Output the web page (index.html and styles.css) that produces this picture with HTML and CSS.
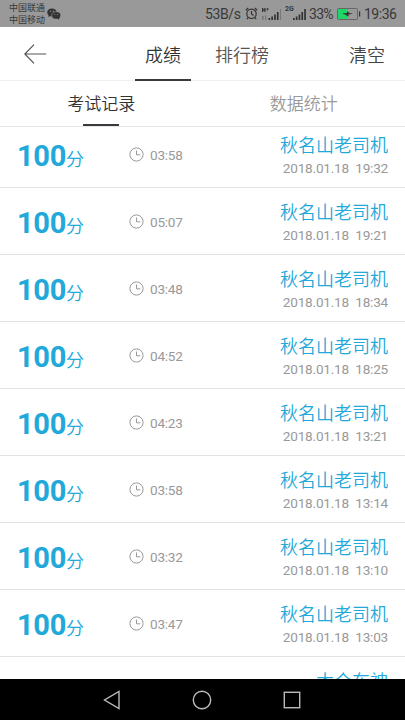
FILE: index.html
```
<!DOCTYPE html>
<html lang="zh-CN">
<head>
<meta charset="utf-8">
<title>考试记录</title>
<link rel="stylesheet" href="styles.css">
</head>
<body>
<svg class="defs" width="0" height="0">
  <symbol id="clock" viewBox="0 0 15 15"><circle cx="7.5" cy="7.5" r="6.6"/><path d="M7.5 3.5v4.300h3.800"/></symbol>
</svg>
<div class="screen">
  <div class="status">
    <div class="carriers"><span>中国联通</span><span>中国移动</span></div>
    <svg class="wechat" width="14" height="12" viewBox="0 0 14 12">
      <path class="ink" d="M1.600 7L1.400 9l1.800-.9z"/>
      <ellipse class="ink" cx="4.900" cy="4.400" rx="4.700" ry="4"/>
      <ellipse class="ink gap" cx="9.200" cy="7.400" rx="4.500" ry="3.700"/>
      <path class="ink" d="M10 10.500l2.200 1.200-.3-2z"/>
      <circle class="eye" cx="3.400" cy="3.200" r=".6"/><circle class="eye" cx="6.300" cy="3.200" r=".6"/>
      <circle class="eye" cx="7.800" cy="6.400" r=".5"/><circle class="eye" cx="10.600" cy="6.400" r=".5"/>
    </svg>
    <span class="speed">53B/s</span>
    <svg class="alarm" width="13" height="13" viewBox="0 0 13 13">
      <circle cx="6.500" cy="6.800" r="4.700"/><path d="M6.500 4v3l2 1.400M.8 3.200L3.200 1M12.200 3.200L9.800 1M3 10.600l-1.200 1.600M10 10.600l1.200 1.600"/>
    </svg>
    <svg class="signal-a" width="21" height="14" viewBox="0 0 21 14">
      <path class="ink" d="M1 1h1.300v1.500h1V1h1.300v4H3.400v-1.400H2.300V5H1zM5.300 1.800h.9V1h.8v.8h.8v.8H7v.8h-.8v-.8h-.9z"/>
      <path class="faint" d="M1 9h1.500v4H1zM4 8.500h1.200V13H4z"/>
      <path class="ink" d="M7.500 11h1.700v2H7.500zM10.300 9.500H12V13h-1.700zM13.100 7.500h1.700V13h-1.700zM15.900 5h1.700v8h-1.700z"/>
      <path class="faint" d="M19 2h1v11h-1z"/>
    </svg>
    <span class="net">2G</span>
    <svg class="signal-b" width="14" height="14" viewBox="0 0 14 14">
      <path class="ink" d="M0 11h1.700v2H0zM2.800 9.500h1.700V13H2.800zM5.600 7.500h1.700V13H5.600zM8.400 5h1.700v8H8.400zM11.200 2h1.700v11h-1.700z"/>
    </svg>
    <span class="percent">33%</span>
    <svg class="battery" width="24" height="12" viewBox="0 0 24 12">
      <rect class="charge" x="1" y="1" width="9" height="10"/>
      <rect class="case" x=".5" y=".5" width="20" height="11" rx="1"/>
      <path class="ink" d="M5 5.500l5-.6V3L12.500 4.900l3.500.9-4.500.8v2.200L8.500 6.800zM22 3.500h1.200v5H22z"/>
    </svg>
    <span class="now">19:36</span>
  </div>

  <header class="header">
    <svg class="back" width="23" height="20" viewBox="0 0 23 20"><path d="M22.200 10H.8M10 .7L.8 10l9.200 9.300"/></svg>
    <span class="tab tab-on">成绩</span>
    <span class="tab">排行榜</span>
    <span class="clear">清空</span>
  </header>

  <nav class="subtabs">
    <div class="subtab subtab-on">考试记录</div>
    <div class="subtab">数据统计</div>
  </nav>

  <main class="list">
    <div class="rows">
      <div class="row"><div class="score"><b>100</b>分</div><div class="time"><svg class="clock"><use href="#clock"/></svg>03:58</div><div class="who"><div class="name">秋名山老司机</div><div class="date">2018.01.18&nbsp; 19:32</div></div></div>
      <div class="row"><div class="score"><b>100</b>分</div><div class="time"><svg class="clock"><use href="#clock"/></svg>05:07</div><div class="who"><div class="name">秋名山老司机</div><div class="date">2018.01.18&nbsp; 19:21</div></div></div>
      <div class="row"><div class="score"><b>100</b>分</div><div class="time"><svg class="clock"><use href="#clock"/></svg>03:48</div><div class="who"><div class="name">秋名山老司机</div><div class="date">2018.01.18&nbsp; 18:34</div></div></div>
      <div class="row"><div class="score"><b>100</b>分</div><div class="time"><svg class="clock"><use href="#clock"/></svg>04:52</div><div class="who"><div class="name">秋名山老司机</div><div class="date">2018.01.18&nbsp; 18:25</div></div></div>
      <div class="row"><div class="score"><b>100</b>分</div><div class="time"><svg class="clock"><use href="#clock"/></svg>04:23</div><div class="who"><div class="name">秋名山老司机</div><div class="date">2018.01.18&nbsp; 13:21</div></div></div>
      <div class="row"><div class="score"><b>100</b>分</div><div class="time"><svg class="clock"><use href="#clock"/></svg>03:58</div><div class="who"><div class="name">秋名山老司机</div><div class="date">2018.01.18&nbsp; 13:14</div></div></div>
      <div class="row"><div class="score"><b>100</b>分</div><div class="time"><svg class="clock"><use href="#clock"/></svg>03:32</div><div class="who"><div class="name">秋名山老司机</div><div class="date">2018.01.18&nbsp; 13:10</div></div></div>
      <div class="row"><div class="score"><b>100</b>分</div><div class="time"><svg class="clock"><use href="#clock"/></svg>03:47</div><div class="who"><div class="name">秋名山老司机</div><div class="date">2018.01.18&nbsp; 13:03</div></div></div>
      <div class="row"><div class="who"><div class="name">木仓车神</div></div></div>
    </div>
  </main>

  <footer class="navbar">
    <svg width="18" height="20" viewBox="0 0 18 20"><path d="M16 1.500v17L1.500 10z"/></svg>
    <svg width="20" height="20" viewBox="0 0 20 20"><circle cx="10" cy="10" r="8.700"/></svg>
    <svg width="18" height="18" viewBox="0 0 18 18"><rect x="1.300" y="1.300" width="15.400" height="15.400"/></svg>
  </footer>
</div>
</body>
</html>
```

FILE: styles.css
```
* { box-sizing: border-box; }
body {
  margin: 0;
  background: #fff;
  font-family: Roboto, "Noto Sans CJK SC", sans-serif;
}
svg { display: block; flex: none; fill: none; }
.defs { position: absolute; }
.screen {
  width: 405px;
  height: 720px;
  display: flex;
  flex-direction: column;
  overflow: hidden;
}

.status {
  flex: none;
  height: 27px;
  padding-left: 9px;
  display: flex;
  align-items: center;
  background: #999;
  color: #383838;
  font-size: 14px;
  line-height: 20px;
  white-space: nowrap;
}
.status .ink { fill: #333; }
.status .faint { fill: #777; }
.carriers {
  width: 38px;
  padding-top: 1px;
  display: flex;
  flex-direction: column;
  font-size: 9px;
  line-height: 12px;
}
.wechat .gap { stroke: #999; stroke-width: .6; }
.wechat .eye { fill: #999; }
.speed { width: 40px; margin-left: 144px; padding-top: 1px; letter-spacing: -.4px; }
.alarm { stroke: #333; stroke-width: 1.2; }
.signal-a { margin: 1px 0 0 3px; }
.net { width: 8px; margin: -8px 0 0 3px; font-size: 7px; font-weight: 700; line-height: 9px; }
.signal-b { margin-top: 1px; }
.percent { width: 28px; margin-left: 2px; padding-top: 1px; letter-spacing: -.7px; }
.battery { margin-top: 1px; }
.battery .charge { fill: #20d567; }
.battery .case { stroke: #666; }
.now { margin-left: 3px; padding-top: 1px; letter-spacing: -.5px; }

.header {
  flex: none;
  height: 54px;
  padding: 0 20px 0 23.500px;
  display: flex;
  align-items: center;
  border-bottom: 1px solid #f0f0f0;
  color: #555;
  font-size: 18px;
  font-weight: 350;
}
.back { stroke: #555; stroke-width: 1.200; margin-right: 88.500px; }
.tab { height: 54px; line-height: 57px; margin-right: 24px; }
.tab-on {
  width: 56px;
  text-align: center;
  color: #333;
  border-bottom: 2px solid #37393c;
}
.clear { margin-left: auto; height: 54px; line-height: 57px; color: #444; }

.subtabs {
  flex: none;
  height: 46px;
  display: flex;
  border-bottom: 1px solid #e8e8e8;
}
.subtab {
  flex: 1;
  display: flex;
  flex-direction: column;
  align-items: center;
  color: #999;
  font-size: 17px;
  font-weight: 350;
  line-height: 47px;
}
.subtab-on { color: #333; }
.subtab-on::after {
  content: "";
  width: 36px;
  height: 2px;
  margin-top: -4px;
  background: #37393c;
}

.list { flex: 1; min-height: 0; overflow: hidden; }
.rows { margin-top: -6px; }
.row {
  height: 67px;
  padding: 0 17px;
  display: flex;
  border-bottom: 1px solid #e2e2e2;
}
.score {
  width: 112px;
  padding-top: 14px;
  color: #22a8d9;
  font-size: 18px;
  font-weight: 350;
  line-height: 42px;
}
.score b { font-size: 29px; font-weight: 700; letter-spacing: -.3px; }
.time {
  height: 68px;
  display: flex;
  align-items: center;
  gap: 6px;
  color: #999;
  font-size: 13.600px;
  letter-spacing: -.25px;
}
.clock { width: 15px; height: 15px; margin-top: -2px; stroke: #999; stroke-width: 1; }
.who { margin-left: auto; padding-top: 12px; text-align: right; }
.name { color: #22a8d9; font-size: 18px; font-weight: 350; line-height: 26px; }
.date { color: #999; font-size: 13.600px; letter-spacing: -.22px; line-height: 18px; }

.navbar {
  flex: none;
  height: 41px;
  display: flex;
  align-items: center;
  justify-content: center;
  gap: 71px;
  padding-right: 1px;
  background: #000;
}
.navbar svg { stroke: #bbb; stroke-width: 1.400; }
```
